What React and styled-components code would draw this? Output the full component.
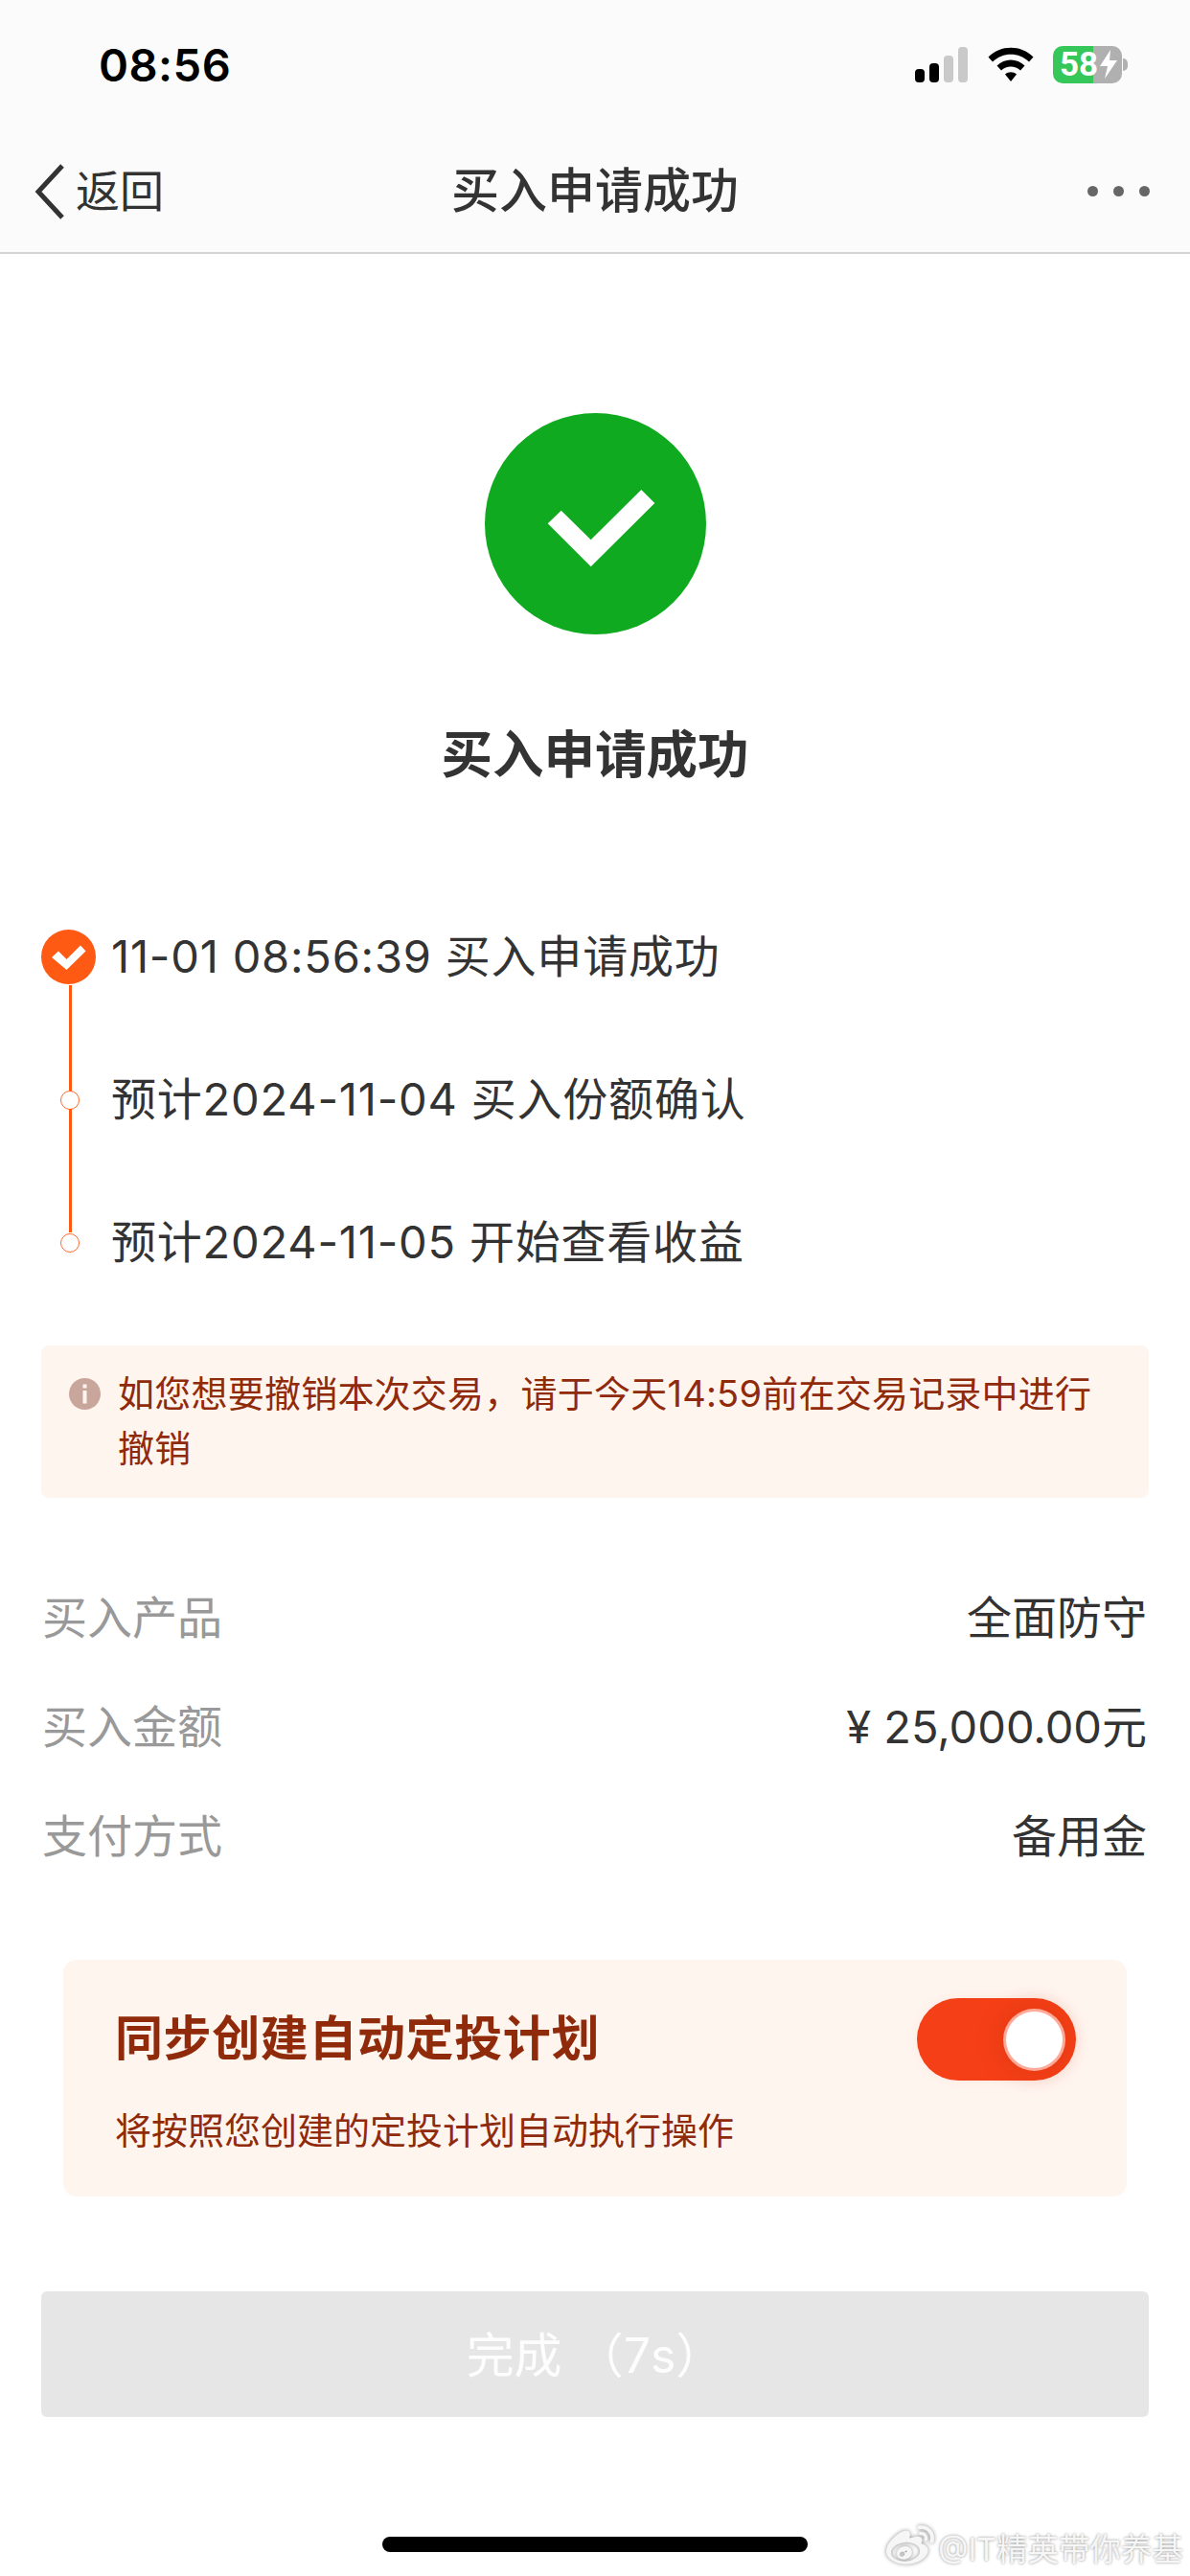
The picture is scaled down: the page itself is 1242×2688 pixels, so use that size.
import React from "react";
import styled, { createGlobalStyle } from "styled-components";
import { FaWeibo } from "react-icons/fa";

const GlobalStyle = createGlobalStyle`
    * {
        box-sizing: border-box;
    }
    html, body {
        margin: 0;
        padding: 0;
        background: #fff;
    }
    body {
        font-family: Inter, "Noto Sans CJK SC", sans-serif;
        color: #333;
    }
`;

const steps = [
    { text: "11-01 08:56:39 买入申请成功", done: true },
    { text: "预计2024-11-04 买入份额确认" },
    { text: "预计2024-11-05 开始查看收益" },
];

const details = [
    ["买入产品", "全面防守"],
    ["买入金额", "¥ 25,000.00元"],
    ["支付方式", "备用金"],
];

function SignalIcon() {
    return (
        <svg width="56" height="38" viewBox="0 0 56 38">
            <rect x="0" y="24" width="10" height="14" rx="4" fill="#000" />
            <rect x="15" y="18" width="10" height="20" rx="4" fill="#000" />
            <rect x="30" y="10" width="10" height="28" rx="4" fill="#c9c9c9" />
            <rect x="45" y="1" width="10" height="37" rx="4" fill="#c9c9c9" />
        </svg>
    );
}

function WifiIcon() {
    return (
        <svg width="48" height="38" viewBox="0 0 48 38">
            <path d="M0.5 11.5C13.5 -1.5 34.500 -1.500 47.500 11.500L43 16.500C32.500 6 15.500 6 5 16.500Z" fill="#000" />
            <path d="M9.500 20.500C17.500 12.500 30.500 12.500 38.500 20.500L34 25.500C28.500 20 19.500 20 14 25.500Z" fill="#000" />
            <path d="M18 29.500C21.500 26.500 26.500 26.500 30 29.500L24 37Z" fill="#000" />
        </svg>
    );
}

function BoltIcon() {
    return (
        <svg width="20" height="30" viewBox="0 0 20 30">
            <path d="M12 0L1 17H9L6 30L19 11H11Z" fill="#fff" />
        </svg>
    );
}

function SuccessIcon() {
    return (
        <svg width="231" height="231" viewBox="0 0 231 231">
            <circle cx="115.500" cy="115.500" r="115.500" fill="#10aa20" />
            <path d="M65.700 115.300L79.700 101.700L110.700 132.300L163.300 80L177.300 94L110.700 160.300Z" fill="#fff" />
        </svg>
    );
}

function DoneDot() {
    return (
        <svg width="57" height="57" viewBox="0 0 57 57">
            <circle cx="28.500" cy="28.500" r="28.500" fill="#ff5a14" />
            <path d="M11 29L18 22.500L26.500 31L41 16.500L46.500 22.500L26.500 42Z" fill="#fff" />
        </svg>
    );
}

function InfoIcon() {
    return (
        <svg width="33" height="33" viewBox="0 0 33 33">
            <circle cx="16.500" cy="16.500" r="16.500" fill="#c9a69b" />
            <rect x="14.500" y="6.500" width="4" height="4" fill="#fff5ef" />
            <rect x="14.500" y="13" width="4" height="13.500" fill="#fff5ef" />
        </svg>
    );
}

export default function App() {
    return (
        <>
            <GlobalStyle />
            <Page>
                <Header>
                    <StatusBar>
                        <Clock>08:56</Clock>
                        <StatusIcons>
                            <SignalIcon />
                            <WifiIcon />
                            <Battery>
                                <BatteryLevel>58</BatteryLevel>
                                <BatteryRest>
                                    <BoltIcon />
                                </BatteryRest>
                            </Battery>
                        </StatusIcons>
                    </StatusBar>
                    <NavBar>
                        <BackLink>
                            <svg width="36" height="60" viewBox="0 0 36 60">
                                <path d="M31 3L6 30L31 57" fill="none" stroke="#333" strokeWidth="5" />
                            </svg>
                            <BackText>返回</BackText>
                        </BackLink>
                        <NavTitle>买入申请成功</NavTitle>
                        <MoreDots>
                            <Dot />
                            <Dot />
                            <Dot />
                        </MoreDots>
                    </NavBar>
                </Header>

                <Content>
                    <Hero>
                        <SuccessIcon />
                        <HeroTitle>买入申请成功</HeroTitle>
                    </Hero>

                    <Timeline>
                        {steps.map((step, i) => (
                            <Step key={step.text} $first={i === 0}>
                                <Marker>{step.done ? <DoneDot /> : <HollowDot />}</Marker>
                                <StepText>{step.text}</StepText>
                            </Step>
                        ))}
                    </Timeline>

                    <Notice>
                        <NoticeIcon>
                            <InfoIcon />
                        </NoticeIcon>
                        <NoticeText>如您想要撤销本次交易，请于今天14:59前在交易记录中进行撤销</NoticeText>
                    </Notice>

                    <Details>
                        {details.map(([label, value]) => (
                            <DetailRow key={label}>
                                <DetailLabel>{label}</DetailLabel>
                                <DetailValue>{value}</DetailValue>
                            </DetailRow>
                        ))}
                    </Details>

                    <PlanCard>
                        <PlanHead>
                            <PlanTitle>同步创建自动定投计划</PlanTitle>
                            <Toggle>
                                <Knob />
                            </Toggle>
                        </PlanHead>
                        <PlanText>将按照您创建的定投计划自动执行操作</PlanText>
                    </PlanCard>

                    <DoneButton>完成 （7s）</DoneButton>
                </Content>

                <HomeIndicator />

                <Watermark>
                    <FaWeibo size={50} />
                    <span>@IT精英带你养基</span>
                </Watermark>
            </Page>
        </>
    );
}

const Page = styled.div`
    position: relative;
    width: 1242px;
    height: 2688px;
    overflow: hidden;
    background: #fff;
`;
const Header = styled.header`
    height: 265px;
    background: #fbfbfb;
    border-bottom: 2px solid #d4d4d4;
`;
const StatusBar = styled.div`
    height: 134px;
    display: flex;
    justify-content: space-between;
    align-items: center;
    padding: 0 71px 0 103px;
`;
const Clock = styled.span`
    font-size: 47px;
    font-weight: 600;
    color: #000;
    letter-spacing: 0.5px;
`;
const StatusIcons = styled.div`
    display: flex;
    align-items: center;
    gap: 20px;
`;
const Battery = styled.div`
    position: relative;
    width: 72px;
    height: 39px;
    display: flex;
    border-radius: 10px;
    &:after {
        content: "";
        position: absolute;
        right: -6px;
        top: 13px;
        width: 5px;
        height: 13px;
        border-radius: 0 6px 6px 0;
        background: #b0b0b0;
    }
`;
const BatteryLevel = styled.div`
    position: relative;
    z-index: 1;
    width: 42px;
    background: #35c759;
    color: #fff;
    font-family: Roboto, sans-serif;
    font-size: 35px;
    font-weight: 700;
    line-height: 39px;
    padding-left: 7px;
    border-radius: 10px 0 0 10px;
    white-space: nowrap;
`;
const BatteryRest = styled.div`
    flex: 1;
    background: #b0b0b0;
    display: flex;
    align-items: center;
    justify-content: flex-end;
    padding-right: 4px;
    border-radius: 0 10px 10px 0;
`;
const NavBar = styled.nav`
    position: relative;
    height: 131px;
    display: flex;
    justify-content: space-between;
    align-items: center;
    padding: 0 42px 0 34px;
`;
const BackLink = styled.div`
    display: flex;
    align-items: center;
    gap: 9px;
`;
const BackText = styled.span`
    font-size: 46px;
    line-height: 60px;
    padding-bottom: 1px;
    color: #333;
`;
const NavTitle = styled.h1`
    position: absolute;
    left: 0;
    right: 0;
    top: 30px;
    margin: 0;
    text-align: center;
    font-size: 50px;
    line-height: 70px;
    font-weight: 500;
    color: #333;
    pointer-events: none;
`;
const MoreDots = styled.div`
    display: flex;
    gap: 16px;
`;
const Dot = styled.i`
    width: 11px;
    height: 11px;
    border-radius: 50%;
    background: #666;
`;
const Content = styled.main`
    padding: 0 43px;
`;
const Hero = styled.section`
    display: flex;
    flex-direction: column;
    align-items: center;
    padding-top: 166px;
`;
const HeroTitle = styled.h2`
    margin: 96px 0 0;
    font-size: 53.5px;
    line-height: 60px;
    font-weight: 700;
    color: #333;
`;
const Timeline = styled.section`
    margin-top: 106px;
`;
const Step = styled.div`
    position: relative;
    height: 149px;
    display: flex;
    align-items: center;
    &:not(:last-child):after {
        content: "";
        position: absolute;
        left: 29px;
        top: ${(p) => (p.$first ? "104px" : "84px")};
        width: 3px;
        height: ${(p) => (p.$first ? "114px" : "129px")};
        background: #ff5a14;
    }
`;
const Marker = styled.div`
    width: 73px;
    height: 57px;
    flex-shrink: 0;
    display: flex;
    align-items: center;
`;
const HollowDot = styled.span`
    width: 20px;
    height: 20px;
    margin-left: 20px;
    border-radius: 50%;
    border: 1.5px solid #ff6a30;
    background: #fff;
`;
const StepText = styled.span`
    font-size: 47px;
    letter-spacing: 0.8px;
    padding-bottom: 9px;
    color: #333;
    white-space: nowrap;
`;
const Notice = styled.section`
    margin-top: 33px;
    height: 159px;
    display: flex;
    gap: 18px;
    padding: 22px 50px 0 29px;
    background: #fff5ef;
    border-radius: 8px;
`;
const NoticeIcon = styled.div`
    flex-shrink: 0;
    padding-top: 12px;
    height: 45px;
`;
const NoticeText = styled.p`
    margin: 0;
    font-size: 38px;
    line-height: 57px;
    letter-spacing: 0.23px;
    color: #8f2a0a;
`;
const Details = styled.section`
    margin-top: 67px;
`;
const DetailRow = styled.div`
    height: 114px;
    display: flex;
    justify-content: space-between;
    align-items: center;
    padding: 0 2px 6px 1px;
    font-size: 47px;
`;
const DetailLabel = styled.span`
    color: #999;
`;
const DetailValue = styled.span`
    color: #333;
`;
const PlanCard = styled.section`
    margin: 73px 23px 0;
    height: 247px;
    padding: 40px 53px 0 54px;
    background: #fff5ef;
    border-radius: 14px;
`;
const PlanHead = styled.div`
    display: flex;
    justify-content: space-between;
    align-items: center;
`;
const PlanTitle = styled.h3`
    margin: 0;
    padding-bottom: 11px;
    font-size: 50px;
    letter-spacing: 0.6px;
    font-weight: 700;
    color: #8f2a0a;
`;
const Toggle = styled.div`
    width: 166px;
    height: 86px;
    display: flex;
    justify-content: flex-end;
    align-items: center;
    padding-right: 14px;
    border-radius: 43px;
    background: #f53f17;
    box-shadow: 0 0 14px rgba(245, 63, 23, 0.06);
`;
const Knob = styled.span`
    width: 59px;
    height: 59px;
    border-radius: 50%;
    background: #fff;
    box-shadow: 0 0 0 3px #ffaa99, 0 0 24px 6px rgba(190, 50, 10, 0.3);
`;
const PlanText = styled.p`
    margin: 26px 0 0;
    font-size: 38px;
    line-height: 52px;
    color: #8f2a0a;
`;
const DoneButton = styled.button`
    display: block;
    width: 100%;
    height: 131px;
    margin-top: 99px;
    padding: 0 0 5px;
    border: 0;
    border-radius: 6px;
    background: #e6e6e6;
    color: #fdfdfd;
    font-family: inherit;
    font-size: 50px;
`;
const HomeIndicator = styled.div`
    width: 444px;
    height: 16px;
    margin: 125px auto 0;
    border-radius: 8px;
    background: #000;
`;
const Watermark = styled.div`
    position: absolute;
    left: 925px;
    top: 2632px;
    display: flex;
    align-items: center;
    gap: 4px;
    font-size: 32.5px;
    color: #f6f6f6;
    white-space: nowrap;
    text-shadow: 0 0 3px rgba(0, 0, 0, 0.45);
    svg {
        filter: drop-shadow(0 0 2px rgba(0, 0, 0, 0.45));
    }
`;
